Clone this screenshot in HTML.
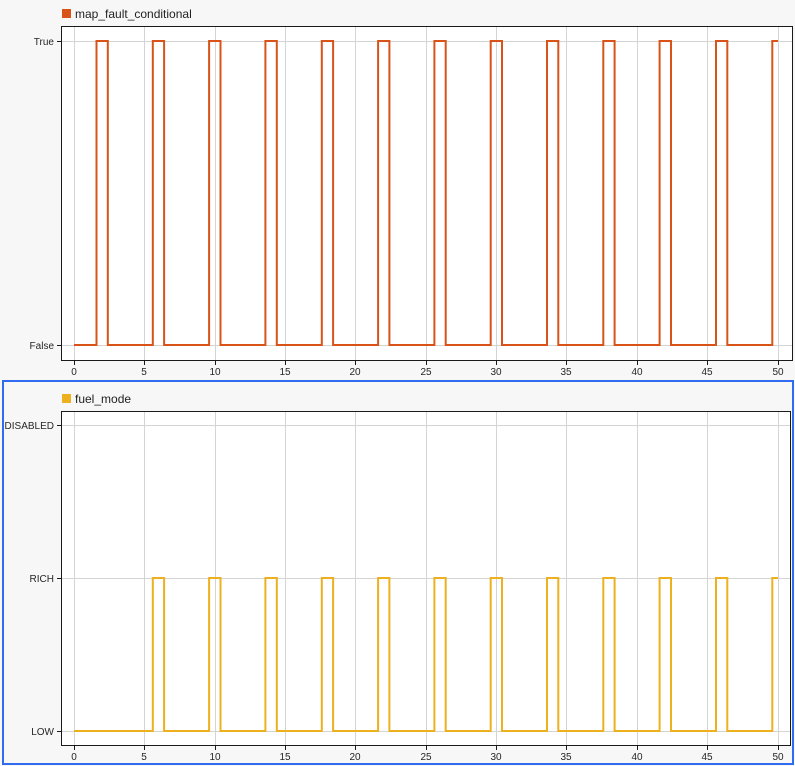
<!DOCTYPE html><html><head><style>body{margin:0;background:#f7f7f7;}svg{display:block}</style></head><body>
<svg width="795" height="766" xmlns="http://www.w3.org/2000/svg" font-family="Liberation Sans, sans-serif">
<rect width="795" height="766" fill="#f7f7f7"/>
<!-- top plot -->
<rect x="62" y="9" width="9" height="9" fill="#d95319"/>
<text x="75" y="18" font-size="12" fill="#222">map_fault_conditional</text>
<rect x="61.5" y="26.5" width="731" height="334" fill="#fff"/>
<g stroke="#d4d4d4" stroke-width="1">
<path d="M74.5 26V361M144.5 26V361M215.5 26V361M285.5 26V361M355.5 26V361M426.5 26V361M496.5 26V361M566.5 26V361M637.5 26V361M707.5 26V361M778.5 26V361M61 41.5H793M61 345.5H793"/>
</g>
<rect x="61.5" y="26.5" width="731" height="334" fill="none" stroke="#1a1a1a" stroke-width="1"/>
<g stroke="#1a1a1a"><path d="M57 41.5H61M57 345.5H61M74.5 361V365M144.5 361V365M215.5 361V365M285.5 361V365M355.5 361V365M426.5 361V365M496.5 361V365M566.5 361V365M637.5 361V365M707.5 361V365M778.5 361V365"/></g>
<g font-size="10" fill="#262626" text-anchor="end"><text x="54" y="45">True</text><text x="54" y="349">False</text></g>
<g font-size="10" fill="#262626" text-anchor="middle"><text x="74" y="375">0</text><text x="144" y="375">5</text><text x="215" y="375">10</text><text x="285" y="375">15</text><text x="355" y="375">20</text><text x="426" y="375">25</text><text x="496" y="375">30</text><text x="566" y="375">35</text><text x="637" y="375">40</text><text x="707" y="375">45</text><text x="778" y="375">50</text></g>
<path fill="none" stroke="#d95319" stroke-width="2" d="M74,345H96.5V41H107.8V345H152.8V41H164.1V345H209.1V41H220.5V345H265.4V41H276.8V345H321.8V41H333.1V345H378.1V41H389.4V345H434.4V41H445.7V345H490.7V41H502V345H547V41H558.3V345H603.3V41H614.6V345H659.6V41H671V345H716V41H727.3V345H772.3V41H778"/>
<!-- bottom -->
<rect x="3" y="381" width="790" height="383" fill="#f7f7f7" stroke="#2f6cf0" stroke-width="2"/>
<rect x="62" y="394" width="9" height="9" fill="#edb120"/>
<text x="75" y="403" font-size="12" fill="#222">fuel_mode</text>
<rect x="61.5" y="411.5" width="729" height="334" fill="#fff"/>
<g stroke="#d4d4d4" stroke-width="1">
<path d="M74.5 411V746M144.5 411V746M215.5 411V746M285.5 411V746M355.5 411V746M426.5 411V746M496.5 411V746M566.5 411V746M637.5 411V746M707.5 411V746M778.5 411V746M61 425.5H791M61 578.5H791M61 731.5H791"/>
</g>
<rect x="61.5" y="411.5" width="729" height="334" fill="none" stroke="#1a1a1a" stroke-width="1"/>
<g stroke="#1a1a1a"><path d="M57 425.5H61M57 578.5H61M57 731.5H61M74.5 746V750M144.5 746V750M215.5 746V750M285.5 746V750M355.5 746V750M426.5 746V750M496.5 746V750M566.5 746V750M637.5 746V750M707.5 746V750M778.5 746V750"/></g>
<g font-size="10" fill="#262626" text-anchor="end"><text x="54" y="429">DISABLED</text><text x="54" y="582">RICH</text><text x="54" y="735">LOW</text></g>
<g font-size="10" fill="#262626" text-anchor="middle"><text x="74" y="760">0</text><text x="144" y="760">5</text><text x="215" y="760">10</text><text x="285" y="760">15</text><text x="355" y="760">20</text><text x="426" y="760">25</text><text x="496" y="760">30</text><text x="566" y="760">35</text><text x="637" y="760">40</text><text x="707" y="760">45</text><text x="778" y="760">50</text></g>
<path fill="none" stroke="#edb120" stroke-width="2" d="M74,731H152.8V578H164.1V731H209.1V578H220.5V731H265.4V578H276.8V731H321.8V578H333.1V731H378.1V578H389.4V731H434.4V578H445.7V731H490.7V578H502V731H547V578H558.3V731H603.3V578H614.6V731H659.6V578H671V731H716V578H727.3V731H772.3V578H778"/>
</svg>
</body></html>
